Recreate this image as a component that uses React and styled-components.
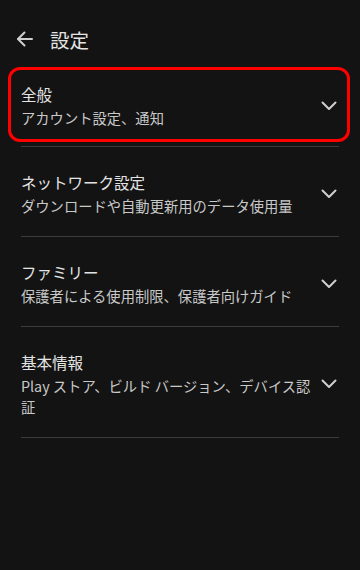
import React from "react";
import styled, { createGlobalStyle } from "styled-components";

const Global = createGlobalStyle`
  html, body { margin: 0; padding: 0; background: #131313; }
  body { font-family: "Noto Sans CJK JP", "Noto Sans", sans-serif; -webkit-font-smoothing: antialiased; }
`;

const Screen = styled.div`
  width: 360px;
  min-height: 570px;
  background: #131313;
  color: #e2e2e2;
`;

const Header = styled.header`
  display: flex;
  align-items: center;
  height: 34px;
  padding: 22px 0 0 13px;
  gap: 13px;
`;

const BackButton = styled.button`
  display: flex;
  align-items: center;
  justify-content: center;
  width: 24px;
  height: 24px;
  padding: 0;
  border: none;
  background: none;
  color: #cfcfcf;
`;

const Title = styled.h1`
  margin: 0;
  font-size: 19.5px;
  font-weight: 400;
  color: #e4e4e4;
  letter-spacing: 0;
`;

const List = styled.div`
  display: flex;
  flex-direction: column;
  padding: 0 21px;
  margin-top: 1px;
`;

const Item = styled.div`
  position: relative;
  display: flex;
  align-items: center;
  gap: 8px;
  padding: ${(p) => (p.$first ? "26px 0 18px" : "24px 0 20px")};
  border-bottom: 1px solid #3c3c3c;
`;

const Highlight = styled.div`
  position: absolute;
  left: -13px;
  right: -11px;
  top: 10px;
  bottom: 4px;
  border: 3px solid #ff0000;
  border-radius: 12px;
  pointer-events: none;
`;

const Texts = styled.div`
  flex: 1;
  display: flex;
  flex-direction: column;
  gap: 2px;
`;

const ItemTitle = styled.div`
  font-size: 15.5px;
  line-height: 22px;
  color: #e4e4e4;
`;

const ItemSub = styled.div`
  font-size: 14.3px;
  line-height: 21px;
  color: #c9c9c9;
`;

const Chevron = styled.svg`
  flex: none;
  width: 16px;
  height: 10px;
  margin-right: 2px;
  color: #cfcfcf;
`;

const sections = [
  { title: "全般", sub: "アカウント設定、通知", highlight: true },
  { title: "ネットワーク設定", sub: "ダウンロードや自動更新用のデータ使用量" },
  { title: "ファミリー", sub: "保護者による使用制限、保護者向けガイド" },
  { title: "基本情報", sub: "Play ストア、ビルド バージョン、デバイス認証" },
];

export default function App() {
  return (
    <Screen>
      <Global />
      <Header>
        <BackButton aria-label="戻る">
          <svg width="24" height="24" viewBox="0 0 24 24" fill="none" stroke="currentColor" strokeWidth="2" strokeLinecap="round" strokeLinejoin="round">
            <path d="M19 12H5" />
            <path d="m11.5 18.5-6.5-6.5 6.5-6.5" />
          </svg>
        </BackButton>
        <Title>設定</Title>
      </Header>
      <List>
        {sections.map((s, i) => (
          <Item key={s.title} $first={i === 0}>
            {s.highlight && <Highlight />}
            <Texts>
              <ItemTitle>{s.title}</ItemTitle>
              <ItemSub>{s.sub}</ItemSub>
            </Texts>
            <Chevron viewBox="0 0 16 10" fill="none" stroke="currentColor" strokeWidth="2" strokeLinecap="round" strokeLinejoin="round">
              <polyline points="1.5,1.5 8,8 14.5,1.5" />
            </Chevron>
          </Item>
        ))}
      </List>
    </Screen>
  );
}
